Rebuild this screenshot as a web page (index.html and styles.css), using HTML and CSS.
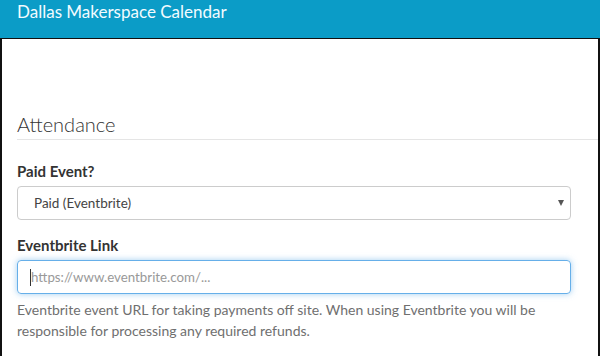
FILE: index.html
```html
<!DOCTYPE html>
<html>
<head>
<meta charset="utf-8">
<link rel="stylesheet" href="styles.css">
</head>
<body>
<header class="topbar">
  <span class="brand">Dallas Makerspace Calendar</span>
</header>
<main class="frame">
  <form class="form">
    <div class="legend">Attendance</div>
    <div class="group">
      <label class="label">Paid Event?</label>
      <div class="select">
        <span class="select-text">Paid (Eventbrite)</span>
        <span class="caret"></span>
      </div>
    </div>
    <div class="group">
      <label class="label">Eventbrite Link</label>
      <div class="input focused">
        <span class="cursor"></span><span class="placeholder">https://www.eventbrite.com/...</span>
      </div>
      <p class="help">Eventbrite event URL for taking payments off site. When using Eventbrite you will be responsible for processing any required refunds.</p>
    </div>
  </form>
</main>
</body>
</html>
```
FILE: styles.css
```css
html, body {
  margin: 0;
  padding: 0;
  height: 100%;
  background: #fff;
}
body {
  font-family: "Lato", "Liberation Sans", sans-serif;
  color: #333;
  display: flex;
  flex-direction: column;
  overflow: hidden;
}
.topbar {
  box-sizing: border-box;
  height: 39px;
  background: #0b9cc7;
  border-bottom: 1px solid #111;
  padding-left: 17px;
  flex: none;
}
.brand {
  display: block;
  color: #f2fbff;
  font-size: 17px;
  line-height: 24px;
}
.frame {
  flex: 1;
  border-left: 2px solid #111;
  border-right: 2px solid #111;
  border-bottom: 2px solid #111;
  padding: 0 24px 0 15px;
}
.form { margin: 0; }
.legend {
  margin-top: 71px;
  font-size: 20px;
  font-weight: 300;
  line-height: 29px;
  color: #333;
  border-bottom: 1px solid #e5e5e5;
  margin-bottom: 21px;
  margin-right: -24px;
}
.group { margin-bottom: 15px; }
.label {
  display: block;
  font-size: 15px;
  font-weight: 700;
  line-height: 20px;
  margin-bottom: 5px;
  color: #333;
}
.select, .input {
  box-sizing: border-box;
  height: 34px;
  width: 554px;
  border: 1px solid #ccc;
  border-radius: 4px;
  display: flex;
  align-items: center;
}
.select {
  padding: 0 6px 0 16px;
  justify-content: space-between;
  color: #444;
  font-size: 13.5px;
}
.caret {
  width: 0;
  height: 0;
  border-left: 3.5px solid transparent;
  border-right: 3.5px solid transparent;
  border-top: 6px solid #555;
}
.input.focused {
  border-color: #66afe9;
  box-shadow: 0 0 6px rgba(102, 175, 233, 0.6);
  padding-left: 12px;
  font-size: 13.3px;
}
.cursor {
  width: 1px;
  height: 17px;
  background: #333;
}
.placeholder { color: #999; }
.help {
  margin: 5px 0 0;
  font-size: 14px;
  line-height: 21px;
  color: #6f6f6f;
  width: 556px;
}
```
